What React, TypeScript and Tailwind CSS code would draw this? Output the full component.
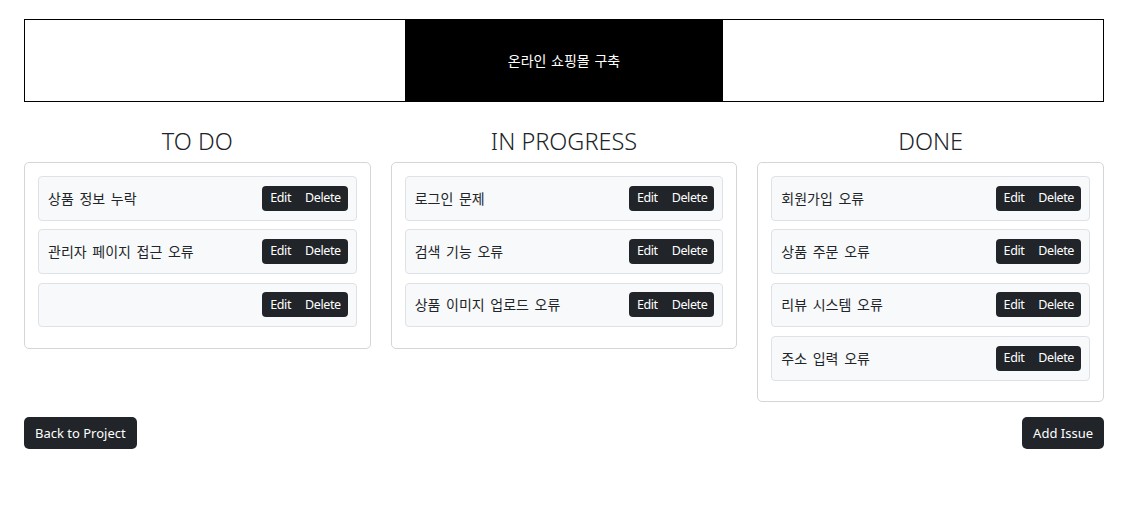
import React from "react";

const columns: { title: string; items: string[] }[] = [
  { title: "TO DO", items: ["상품 정보 누락", "관리자 페이지 접근 오류", ""] },
  { title: "IN PROGRESS", items: ["로그인 문제", "검색 기능 오류", "상품 이미지 업로드 오류"] },
  { title: "DONE", items: ["회원가입 오류", "상품 주문 오류", "리뷰 시스템 오류", "주소 입력 오류"] },
];

function Item({ text }: { text: string }) {
  return (
    <div className="flex h-[44.8px] items-center justify-between rounded-[4px] border border-[#dee2e6] bg-[#f8f9fa] pl-[9px] pr-[8px]">
      <span className="text-[14px] text-[#212529] [word-spacing:2px]">{text}</span>
      <div className="flex h-[25px] items-center rounded-[4px] bg-[#212529] text-[12.5px] text-white">
        <span className="pl-[8px] pr-[7px] tracking-[-0.4px]">Edit</span>
        <span className="pl-[7px] pr-[7px] tracking-[-0.4px]">Delete</span>
      </div>
    </div>
  );
}

export default function App() {
  return (
    <div
      className="min-h-[513px] bg-white pl-[24px] pr-[36px] pt-[19px]"
      style={{ fontFamily: '"Noto Sans", "Noto Sans CJK KR", sans-serif' }}
    >
      <div className="flex h-[83px] justify-center border border-black">
        <div className="flex w-[318px] items-center justify-center bg-black text-[14px] text-white [word-spacing:1px]">
          온라인 쇼핑몰 구축
        </div>
      </div>
      <div className="grid grid-cols-3 items-start gap-x-[20px]">
        {columns.map((col) => (
          <div key={col.title}>
            <h2 className="mb-[4px] mt-[23px] h-[33px] text-center text-[23.5px] font-light leading-[33px] text-[#212529]">
              {col.title}
            </h2>
            <div className="flex flex-col gap-[8.5px] rounded-[5px] border border-[#d3d6d9] px-[13px] pb-[20.8px] pt-[13px]">
              {col.items.map((t, i) => (
                <Item key={i} text={t} />
              ))}
            </div>
          </div>
        ))}
      </div>
      <div className="mt-[15px] flex justify-between">
        <button className="h-[32px] rounded-[5px] bg-[#212529] px-[11px] text-[13px] text-white">
          Back to Project
        </button>
        <button className="h-[32px] rounded-[5px] bg-[#212529] px-[11px] text-[13px] text-white">
          Add Issue
        </button>
      </div>
    </div>
  );
}
